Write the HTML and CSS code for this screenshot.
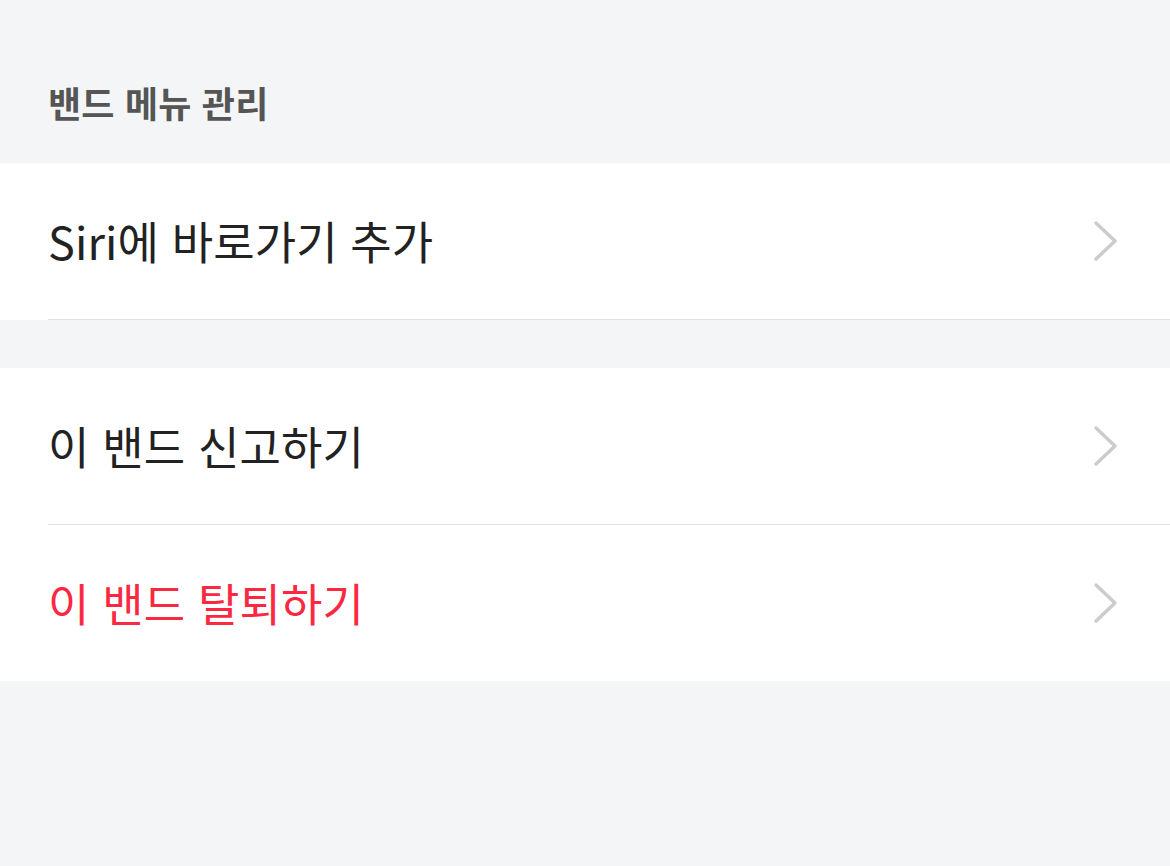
FILE: index.html
```html
<!DOCTYPE html>
<html lang="ko">
<head>
<meta charset="utf-8">
<link rel="stylesheet" href="styles.css">
</head>
<body>
<div class="page">
  <div class="section-title">밴드 메뉴 관리</div>
  <div class="group">
    <div class="row">
      <div class="row-inner">
        <span class="label">Siri에 바로가기 추가</span>
        <svg class="chev" width="28" height="44" viewBox="0 0 28 44"><path d="M4 4 L23 22 L4 40" fill="none" stroke="#cccccc" stroke-width="3.5" stroke-linecap="round" stroke-linejoin="round"/></svg>
      </div>
    </div>
  </div>
  <div class="group">
    <div class="row">
      <div class="row-inner">
        <span class="label">이 밴드 신고하기</span>
        <svg class="chev" width="28" height="44" viewBox="0 0 28 44"><path d="M4 4 L23 22 L4 40" fill="none" stroke="#cccccc" stroke-width="3.5" stroke-linecap="round" stroke-linejoin="round"/></svg>
      </div>
    </div>
    <div class="row">
      <div class="row-inner last">
        <span class="label danger">이 밴드 탈퇴하기</span>
        <svg class="chev" width="28" height="44" viewBox="0 0 28 44"><path d="M4 4 L23 22 L4 40" fill="none" stroke="#cccccc" stroke-width="3.5" stroke-linecap="round" stroke-linejoin="round"/></svg>
      </div>
    </div>
  </div>
</div>
</body>
</html>
```
FILE: styles.css
```css
html, body {
  margin: 0;
  padding: 0;
  background: #f4f5f7;
}
.page {
  width: 1170px;
  height: 866px;
  font-family: "Noto Sans CJK KR", "Noto Sans", sans-serif;
}
.section-title {
  height: 163px;
  box-sizing: border-box;
  padding: 77px 0 0 48px;
  font-size: 36px;
  font-weight: 700;
  color: #555555;
  line-height: 50px;
  letter-spacing: 0.2px;
}
.group {
  background: #ffffff;
  margin-bottom: 48px;
}
.row {
  padding-left: 48px;
}
.row-inner {
  height: 156px;
  display: flex;
  align-items: center;
  justify-content: space-between;
  padding-right: 50px;
  border-bottom: 1px solid #e1e1e1;
}
.row-inner.last {
  border-bottom: none;
}
.label {
  font-size: 45px;
  line-height: 60px;
  color: #222222;
  letter-spacing: 0.1px;
}
.label.danger {
  color: #fa2841;
}
.chev {
  display: block;
}
```
